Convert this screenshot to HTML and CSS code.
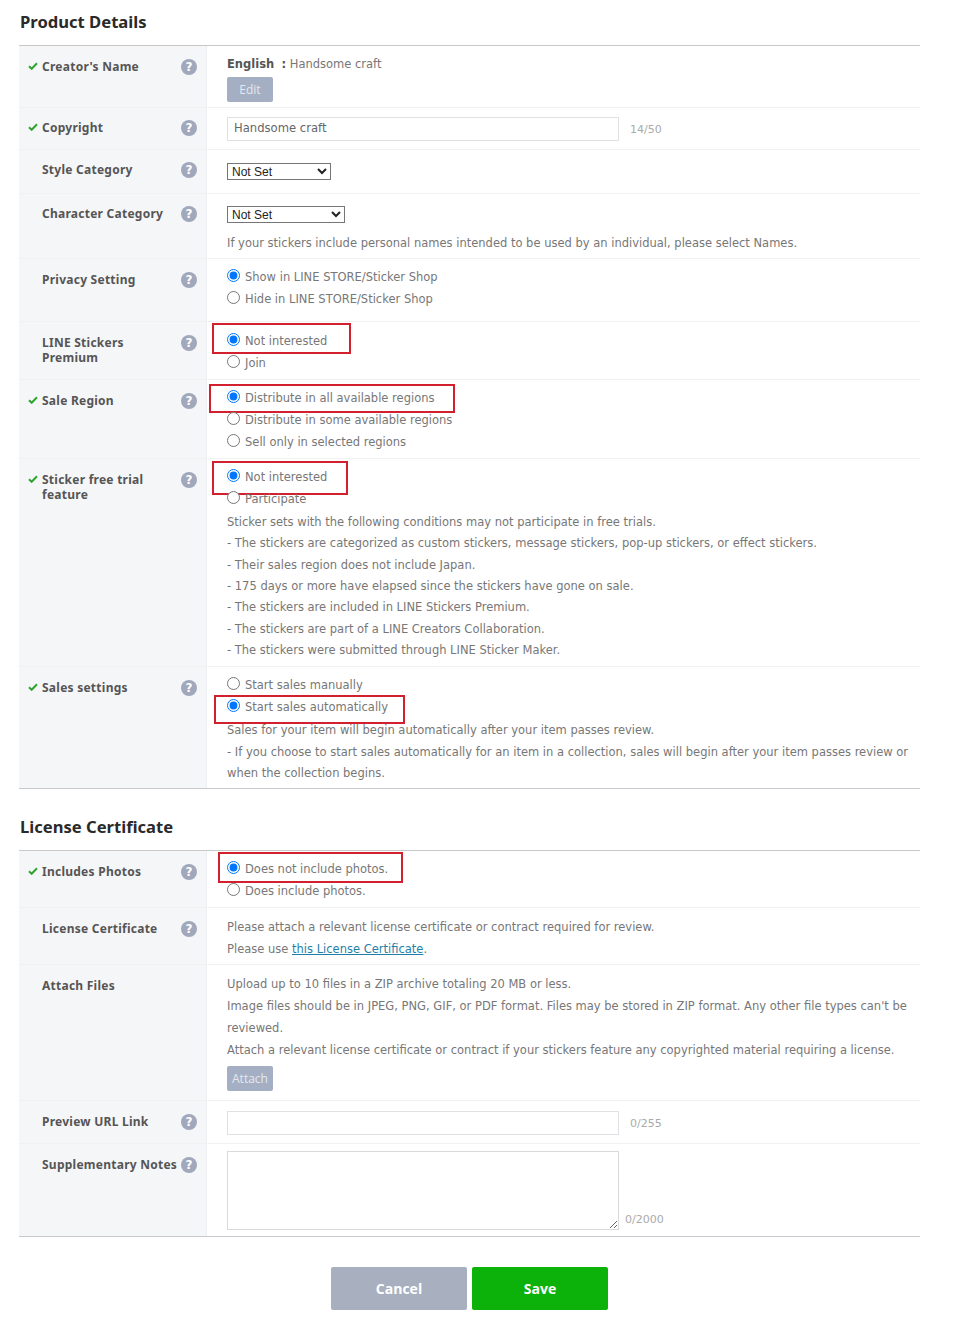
FILE: index.html
```html
<!DOCTYPE html>
<html lang="en">
<head>
    <meta charset="UTF-8">
    <title>Product Details</title>
    <link rel="stylesheet" href="styles.css">
</head>
<body>
    <h2>Product Details</h2>
    <div class="table">
        <div class="row">
            <div class="head"><svg class="check" viewBox="0 0 10 8"><path d="M1 4.2 3.7 6.8 9 1.2"/></svg><span class="name">Creator's Name</span><span class="help">?</span></div>
            <div class="cell cell-creator">
                <div class="line"><b>English</b>&nbsp;&nbsp;<b>:</b> Handsome craft</div>
                <button class="btn-small">Edit</button>
            </div>
        </div>
        <div class="row">
            <div class="head head-short"><svg class="check" viewBox="0 0 10 8"><path d="M1 4.2 3.7 6.8 9 1.2"/></svg><span class="name">Copyright</span><span class="help">?</span></div>
            <div class="cell cell-field">
                <input class="field" type="text" value="Handsome craft"><span class="count">14/50</span>
            </div>
        </div>
        <div class="row">
            <div class="head head-short"><span class="name">Style Category</span><span class="help">?</span></div>
            <div class="cell cell-select">
                <select class="select-style"><option>Not Set</option></select>
            </div>
        </div>
        <div class="row">
            <div class="head head-short"><span class="name">Character Category</span><span class="help">?</span></div>
            <div class="cell cell-select-note">
                <select class="select-char"><option>Not Set</option></select>
                <div class="line line-after-select">If your stickers include personal names intended to be used by an individual, please select Names.</div>
            </div>
        </div>
        <div class="row">
            <div class="head"><span class="name">Privacy Setting</span><span class="help">?</span></div>
            <div class="cell cell-privacy">
                <label class="radio"><input type="radio" name="privacy" checked>Show in LINE STORE/Sticker Shop</label>
                <label class="radio"><input type="radio" name="privacy">Hide in LINE STORE/Sticker Shop</label>
            </div>
        </div>
        <div class="row">
            <div class="head"><span class="name">LINE Stickers Premium</span><span class="help">?</span></div>
            <div class="cell cell-premium">
                <label class="radio"><input type="radio" name="premium" checked>Not interested<span class="mark mark-premium"></span></label>
                <label class="radio"><input type="radio" name="premium">Join</label>
            </div>
        </div>
        <div class="row">
            <div class="head"><svg class="check" viewBox="0 0 10 8"><path d="M1 4.2 3.7 6.8 9 1.2"/></svg><span class="name">Sale Region</span><span class="help">?</span></div>
            <div class="cell">
                <label class="radio"><input type="radio" name="region" checked>Distribute in all available regions<span class="mark mark-region"></span></label>
                <label class="radio"><input type="radio" name="region">Distribute in some available regions</label>
                <label class="radio"><input type="radio" name="region">Sell only in selected regions</label>
            </div>
        </div>
        <div class="row">
            <div class="head"><svg class="check" viewBox="0 0 10 8"><path d="M1 4.2 3.7 6.8 9 1.2"/></svg><span class="name">Sticker free trial feature</span><span class="help">?</span></div>
            <div class="cell">
                <label class="radio"><input type="radio" name="trial" checked>Not interested<span class="mark mark-trial"></span></label>
                <label class="radio"><input type="radio" name="trial">Participate</label>
                <div class="note">Sticker sets with the following conditions may not participate in free trials.</div>
                <div class="note">- The stickers are categorized as custom stickers, message stickers, pop-up stickers, or effect stickers.</div>
                <div class="note">- Their sales region does not include Japan.</div>
                <div class="note">- 175 days or more have elapsed since the stickers have gone on sale.</div>
                <div class="note">- The stickers are included in LINE Stickers Premium.</div>
                <div class="note">- The stickers are part of a LINE Creators Collaboration.</div>
                <div class="note">- The stickers were submitted through LINE Sticker Maker.</div>
            </div>
        </div>
        <div class="row row-last">
            <div class="head"><svg class="check" viewBox="0 0 10 8"><path d="M1 4.2 3.7 6.8 9 1.2"/></svg><span class="name">Sales settings</span><span class="help">?</span></div>
            <div class="cell cell-sales">
                <label class="radio"><input type="radio" name="sales">Start sales manually</label>
                <label class="radio"><input type="radio" name="sales" checked>Start sales automatically<span class="mark mark-sales"></span></label>
                <div class="note">Sales for your item will begin automatically after your item passes review.</div>
                <div class="note">- If you choose to start sales automatically for an item in a collection, sales will begin after your item passes review or when the collection begins.</div>
            </div>
        </div>
    </div>

    <h2 class="second">License Certificate</h2>
    <div class="table">
        <div class="row">
            <div class="head"><svg class="check" viewBox="0 0 10 8"><path d="M1 4.2 3.7 6.8 9 1.2"/></svg><span class="name">Includes Photos</span><span class="help">?</span></div>
            <div class="cell">
                <label class="radio"><input type="radio" name="photos" checked>Does not include photos.<span class="mark mark-photos"></span></label>
                <label class="radio"><input type="radio" name="photos">Does include photos.</label>
            </div>
        </div>
        <div class="row">
            <div class="head"><span class="name">License Certificate</span><span class="help">?</span></div>
            <div class="cell cell-license">
                <div class="line">Please attach a relevant license certificate or contract required for review.</div>
                <div class="line">Please use <a href="#">this License Certificate</a>.</div>
            </div>
        </div>
        <div class="row">
            <div class="head"><span class="name">Attach Files</span></div>
            <div class="cell cell-attach">
                <div class="line">Upload up to 10 files in a ZIP archive totaling 20 MB or less.</div>
                <div class="line">Image files should be in JPEG, PNG, GIF, or PDF format. Files may be stored in ZIP format. Any other file types can't be reviewed.</div>
                <div class="line">Attach a relevant license certificate or contract if your stickers feature any copyrighted material requiring a license.</div>
                <button class="btn-small">Attach</button>
            </div>
        </div>
        <div class="row">
            <div class="head"><span class="name">Preview URL Link</span><span class="help">?</span></div>
            <div class="cell cell-url">
                <input class="field" type="text"><span class="count">0/255</span>
            </div>
        </div>
        <div class="row row-last">
            <div class="head"><span class="name name-wide">Supplementary Notes</span><span class="help">?</span></div>
            <div class="cell cell-notes">
                <textarea class="notes"></textarea><span class="count count-notes">0/2000</span>
            </div>
        </div>
    </div>

    <div class="actions">
        <button class="btn-big btn-cancel">Cancel</button>
        <button class="btn-big btn-save">Save</button>
    </div>
</body>
</html>
```

FILE: styles.css
```css
body {
    margin: 0;
    padding: 0 46px 25px 19px;
    background-color: #fff;
    font-family: "DejaVu Sans", sans-serif;
    font-size: 11.5px;
    color: #777;
}

h2 {
    margin: 10px 0 11px;
    padding-left: 1px;
    font-family: "Noto Sans", sans-serif;
    font-size: 16.6px;
    line-height: 24px;
    color: #2a2a2a;
}

h2.second {
    margin-top: 26px;
}

.table {
    border-top: 1px solid #c8c8c8;
}

.row {
    display: grid;
    grid-template-columns: 188px 1fr;
    border-bottom: 1px solid #f0f1f3;
}

.row-last {
    border-bottom: 1px solid #c8ccd0;
}

.head {
    display: flex;
    align-items: flex-start;
    padding: 12px 9px 0 23px;
    position: relative;
    background-color: #f5f6f8;
    border-right: 1px solid #eceef1;
}

.head-short {
    padding-top: 11px;
}

.check {
    position: absolute;
    left: 9px;
    top: 16px;
    width: 10px;
    height: 8px;
    fill: none;
    stroke: #2ea52e;
    stroke-width: 2;
}

.head-short .check {
    top: 15px;
}

.name {
    flex: 1;
    padding-top: 1px;
    font-family: "Noto Sans", sans-serif;
    font-size: 12px;
    font-weight: bold;
    letter-spacing: 0.25px;
    line-height: 15px;
    color: #555;
}

.name-wide {
    white-space: nowrap;
}

.help {
    flex: none;
    width: 16px;
    height: 16px;
    margin-top: 1px;
    border-radius: 50%;
    background-color: #a1a8bb;
    color: #fff;
    font-size: 12px;
    font-weight: bold;
    line-height: 16px;
    text-align: center;
}

.cell {
    padding: 7px 0 5px 20px;
}

.cell-field {
    padding-top: 9px;
    padding-bottom: 8px;
}

.cell-url {
    padding-top: 10px;
    padding-bottom: 8px;
}

.cell-select {
    padding-top: 13px;
    padding-bottom: 13px;
}

.cell-select-note {
    padding-top: 12px;
    padding-bottom: 4px;
}

.cell-privacy {
    padding-bottom: 11px;
}

.cell-premium {
    padding-top: 8px;
    padding-bottom: 5px;
}

.cell-sales {
    padding-bottom: 4px;
}

.cell-license {
    padding-top: 8px;
    padding-bottom: 4px;
}

.cell-attach {
    padding-top: 8px;
    padding-bottom: 9px;
}

.cell-notes {
    display: flex;
    align-items: flex-end;
    padding-bottom: 6px;
}

.line {
    line-height: 22px;
}

.line-after-select {
    margin-top: 9px;
}

.line b {
    color: #555;
}

.note {
    line-height: 21.33px;
}

.radio + .note {
    margin-top: 2px;
}

.radio {
    display: flex;
    align-items: center;
    position: relative;
    height: 22px;
}

.radio input {
    width: 13px;
    height: 13px;
    margin: 0 5px 3px 0;
}

.mark {
    position: absolute;
    border: 2px solid #d2202f;
    box-sizing: border-box;
}

.mark-premium {
    left: -15px;
    top: -7px;
    width: 139px;
    height: 31px;
}

.mark-region {
    left: -18px;
    top: -3px;
    width: 246px;
    height: 29px;
}

.mark-trial {
    left: -15px;
    top: -5px;
    width: 136px;
    height: 34px;
}

.mark-sales {
    left: -13px;
    top: -1px;
    width: 191px;
    height: 29px;
}

.mark-photos {
    left: -9px;
    top: -6px;
    width: 185px;
    height: 31px;
}

.field {
    width: 392px;
    height: 24px;
    box-sizing: border-box;
    padding: 0 6px 2px;
    border: 1px solid #dfe1e4;
    font-family: "DejaVu Sans", sans-serif;
    font-size: 11.6px;
    color: #666;
}

.count {
    margin-left: 11px;
    font-size: 11px;
    vertical-align: -1px;
    color: #aaa;
}

.count-notes {
    margin-left: 6px;
    margin-bottom: 4px;
}

select {
    display: block;
    height: 17px;
    padding: 0;
    font-family: "Liberation Sans", sans-serif;
    font-size: 12px;
    color: #222;
    background-color: #fff;
}

.select-style {
    width: 104px;
}

.select-char {
    width: 118px;
}

.notes {
    display: block;
    width: 392px;
    height: 79px;
    box-sizing: border-box;
    border: 1px solid #d8dadd;
}

a {
    color: #1f7fa8;
}

.btn-small {
    display: block;
    width: 46px;
    height: 25px;
    margin-top: 2px;
    padding: 0;
    border: none;
    border-radius: 2px;
    background-color: #a4afc3;
    font-family: "Open Sans", sans-serif;
    font-size: 12px;
    color: #e4e8ee;
}

.cell-attach .btn-small {
    margin-top: 5px;
}

.actions {
    display: flex;
    justify-content: center;
    gap: 5px;
    margin-top: 30px;
}

.btn-big {
    width: 136px;
    height: 43px;
    border: none;
    border-radius: 2px;
    font-family: "Open Sans", sans-serif;
    font-size: 14px;
    font-weight: bold;
    color: #fff;
}

.btn-cancel {
    background-color: #a8b0c0;
}

.btn-save {
    background-color: #0cb10a;
}
```
